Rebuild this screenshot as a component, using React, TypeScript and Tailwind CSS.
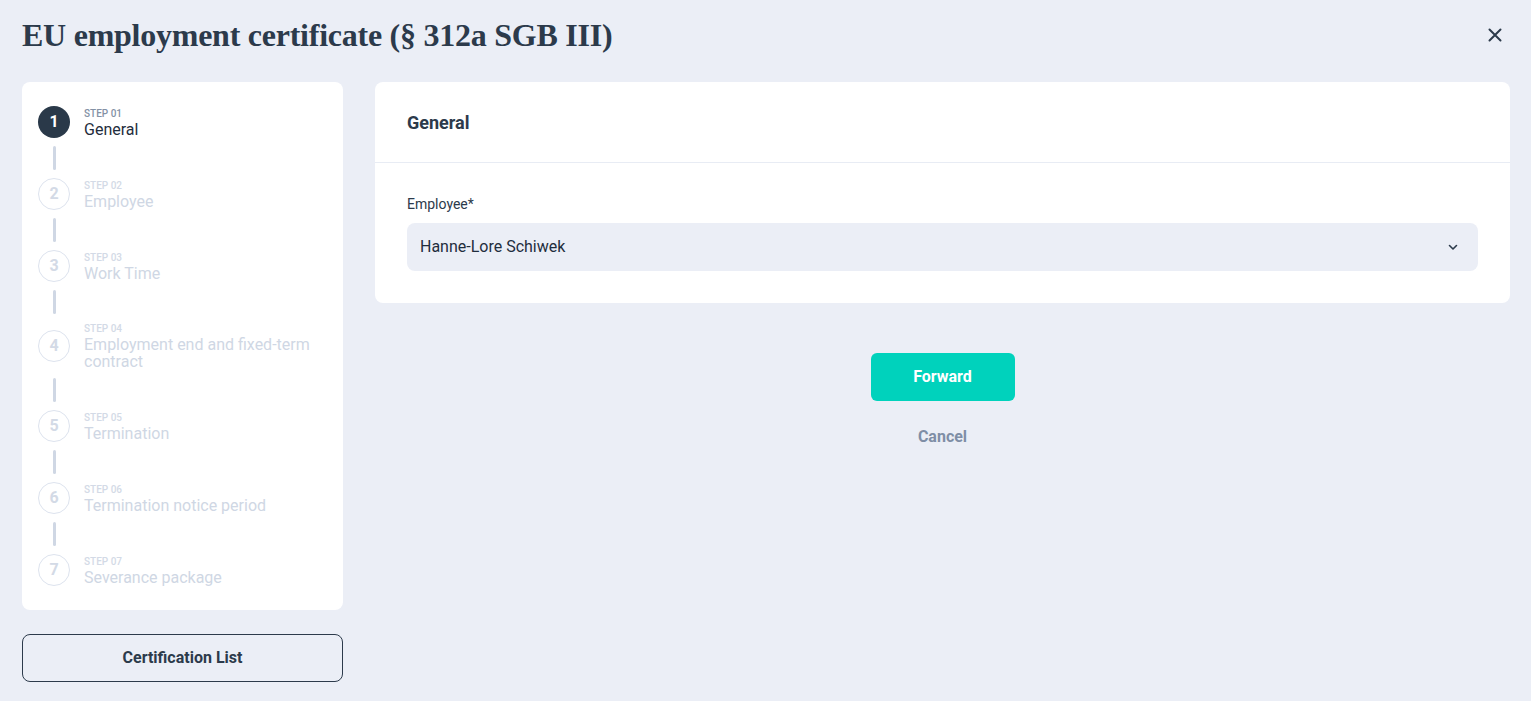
import React from "react";

const steps = [
  "General",
  "Employee",
  "Work Time",
  "Employment end and fixed-term contract",
  "Termination",
  "Termination notice period",
  "Severance package",
];

export default function App() {
  return (
    <div
      className="w-[1531px] h-[701px] bg-[#ebeef6] overflow-hidden text-[#2c3e50]"
      style={{ fontFamily: "Roboto, 'Liberation Sans', sans-serif" }}
    >
      <div className="flex items-center justify-between pl-[22px] pr-[28px] pt-0 h-[82px] pb-[12px]">
        <h1
          className="text-[32px] leading-[40px] font-semibold tracking-[-0.25px] text-[#2c3a4b]"
          style={{ fontFamily: "'Liberation Serif', 'DejaVu Serif', serif" }}
        >
          EU employment certificate (§ 312a SGB III)
        </h1>
        <svg width="16" height="16" viewBox="0 0 16 16" className="text-[#2c3a4b]">
          <path d="M2.5 2.5 L13.5 13.5 M13.5 2.5 L2.5 13.5" stroke="currentColor" strokeWidth="2" strokeLinecap="round" />
        </svg>
      </div>
      <div className="flex gap-[32px] pl-[22px] pr-[21px]">
        <div className="w-[321px] flex flex-col gap-[24px]">
          <div className="bg-white rounded-[8px] pt-[24px] pb-[24px] px-[16px] flex flex-col">
            {steps.map((s, i) => (
              <React.Fragment key={s}>
                {i > 0 && (
                  <div className="w-[32px] flex justify-center py-[8px]">
                    <div className="w-[3px] h-[24px] bg-[#cfd7e4] rounded-full" />
                  </div>
                )}
                <div className="flex items-center gap-[14px] min-h-[32px]">
                  <div
                    className={
                      i === 0
                        ? "w-[32px] h-[32px] shrink-0 rounded-full bg-[#2a3949] text-white flex items-center justify-center text-[16px] font-bold"
                        : "w-[32px] h-[32px] shrink-0 rounded-full border-[1.5px] border-[#dde3ee] text-[#d3dae6] flex items-center justify-center text-[16px] font-bold"
                    }
                  >
                    {i + 1}
                  </div>
                  <div className="flex flex-col">
                    <span
                      className={
                        i === 0
                          ? "text-[10px] leading-[14px] font-medium text-[#8391a5]"
                          : "text-[10px] leading-[14px] font-medium text-[#d3dae6]"
                      }
                    >
                      STEP 0{i + 1}
                    </span>
                    <span
                      className={
                        i === 0
                          ? "text-[16px] leading-[17px] text-[#1f2d3d]"
                          : "text-[16px] leading-[17px] text-[#cfd7e4]"
                      }
                    >
                      {s}
                    </span>
                  </div>
                </div>
              </React.Fragment>
            ))}
          </div>
          <button className="h-[48px] w-full rounded-[8px] border border-[#2c3a4b] text-[16px] font-bold text-[#2c3a4b] bg-transparent">
            Certification List
          </button>
        </div>
        <div className="flex-1 flex flex-col">
          <div className="bg-white rounded-[8px]">
            <div className="h-[81px] flex items-center px-[32px] border-b border-[#e8ecf4]">
              <span className="text-[18px] font-bold text-[#2c3a4b]">General</span>
            </div>
            <div className="px-[32px] pt-[32px] pb-[32px]">
              <div className="text-[14px] leading-[18px] text-[#2c3a4b] mb-[10px]">Employee*</div>
              <div className="h-[48px] rounded-[8px] bg-[#ebeef6] flex items-center justify-between pl-[13px] pr-[18px]">
                <span className="text-[16px] text-[#1f2d3d]">Hanne-Lore Schiwek</span>
                <svg width="14" height="14" viewBox="0 0 14 14">
                  <path d="M3.5 5.5 L7 9 L10.5 5.5" fill="none" stroke="#2c3a4b" strokeWidth="1.6" strokeLinecap="round" strokeLinejoin="round" />
                </svg>
              </div>
            </div>
          </div>
          <div className="flex flex-col items-center mt-[50px]">
            <button className="w-[144px] h-[48px] rounded-[6px] bg-[#00d2bc] text-white text-[16px] font-bold">
              Forward
            </button>
            <button className="mt-[24px] text-[16px] font-bold text-[#7f8ea6]">Cancel</button>
          </div>
        </div>
      </div>
    </div>
  );
}
